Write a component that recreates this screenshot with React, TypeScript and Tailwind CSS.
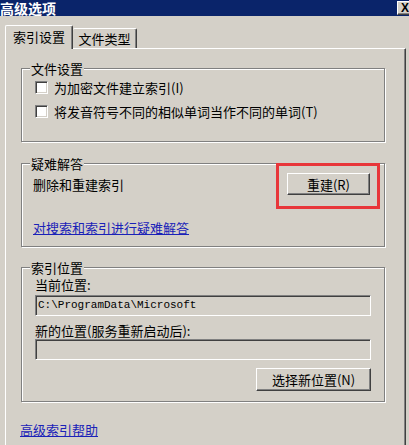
import React from 'react';

const raised =
  'bg-[#d4d0c8] border border-t-white border-l-white border-r-[#404040] border-b-[#404040] shadow-[inset_-1px_-1px_0_#808080]';
const sunken =
  'bg-[#d4d0c8] border border-t-[#808080] border-l-[#808080] border-r-white border-b-white shadow-[inset_1px_1px_0_#404040]';
const etched =
  'relative border border-[#808080] shadow-[inset_1px_1px_0_#fff,1px_1px_0_#fff]';

function Legend({ children }: { children: React.ReactNode }) {
  return (
    <span className="absolute -top-[8px] left-[8px] px-[1px] bg-[#d4d0c8] leading-[15px]">
      {children}
    </span>
  );
}

function Checkbox() {
  return (
    <span className="w-[13px] h-[13px] shrink-0 bg-white border border-t-[#808080] border-l-[#808080] border-r-white border-b-white shadow-[inset_1px_1px_0_#404040,inset_-1px_-1px_0_#d4d0c8]" />
  );
}

export default function App() {
  return (
    <div className="w-[409px] h-[445px] overflow-hidden bg-[#d4d0c8] text-black text-[13px] leading-[15px] font-['Noto_Sans_CJK_SC',sans-serif]">
      <div className="h-[16px] bg-[#0a246a] flex items-center justify-between overflow-hidden">
        <span className="text-white font-bold text-[14px] leading-[14px]">高级选项</span>
        <div className={`-mr-[4px] w-[16px] h-[14px] shrink-0 flex items-center justify-center text-[12px] leading-none font-bold font-['Liberation_Sans',sans-serif] ${raised}`}>
          X
        </div>
      </div>

      <div className="pt-[9px] pl-[5px] pr-[3px]">
        <div className="relative z-10 flex items-end h-[23px]">
          <div className="w-[68px] h-[24px] -mb-[1px] bg-[#d4d0c8] border-t border-l border-white border-r border-r-[#404040] rounded-t-[2px] shadow-[inset_-1px_0_0_#808080] flex justify-center pt-[3px]">
            索引设置
          </div>
          <div className="w-[64px] h-[20px] border-t border-white border-r border-r-[#404040] rounded-t-[2px] shadow-[inset_-1px_0_0_#808080] flex justify-center items-center">
            文件类型
          </div>
        </div>

        <div className="h-[420px] border-t border-l border-white border-r border-r-[#404040] shadow-[inset_-1px_0_0_#808080] pt-[19px]">
          <div className={`${etched} ml-[15px] w-[364px] h-[74px] pl-[13px] pt-[11px]`}>
            <Legend>文件设置</Legend>
            <div className="flex flex-col gap-[9px]">
              <div className="flex items-center gap-[6px] h-[15px]">
                <Checkbox />
                <span>为加密文件建立索引(I)</span>
              </div>
              <div className="flex items-center gap-[6px] h-[15px]">
                <Checkbox />
                <span>将发音符号不同的相似单词当作不同的单词(T)</span>
              </div>
            </div>
          </div>

          <div className={`${etched} mt-[21px] ml-[15px] w-[364px] h-[84px] pl-[11px] pr-[14px] pt-[9px]`}>
            <Legend>疑难解答</Legend>
            <div className="flex items-center justify-between">
              <span>删除和重建索引</span>
              <button className={`w-[83px] h-[22px] flex items-center justify-center ${raised}`}>
                重建(R)
              </button>
            </div>
            <a className="block mt-[25px] text-[#1a22b8] underline w-fit">对搜索和索引进行疑难解答</a>
            <div className="absolute -top-[1px] left-[254px] w-[104px] h-[46px] border-[3px] border-[#e8363a]" />
          </div>

          <div className={`${etched} mt-[20px] ml-[15px] w-[364px] h-[135px] pl-[13px] pr-[13px] pt-[9px]`}>
            <Legend>索引位置</Legend>
            <div>当前位置:</div>
            <div className={`mt-[3px] h-[21px] flex items-center pl-[2px] font-['Liberation_Mono',monospace] text-[11px] ${sunken}`}>
              {'C:\\ProgramData\\Microsoft'}
            </div>
            <div className="mt-[7px]">新的位置(服务重新启动后):</div>
            <div className={`mt-[1px] h-[21px] ${sunken}`} />
            <div className="flex justify-end mt-[8px]">
              <button className={`w-[115px] h-[23px] flex items-center justify-center ${raised}`}>
                选择新位置(N)
              </button>
            </div>
          </div>

          <a className="block mt-[20px] ml-[14px] text-[#1a22b8] underline w-fit">高级索引帮助</a>
        </div>
      </div>
    </div>
  );
}
